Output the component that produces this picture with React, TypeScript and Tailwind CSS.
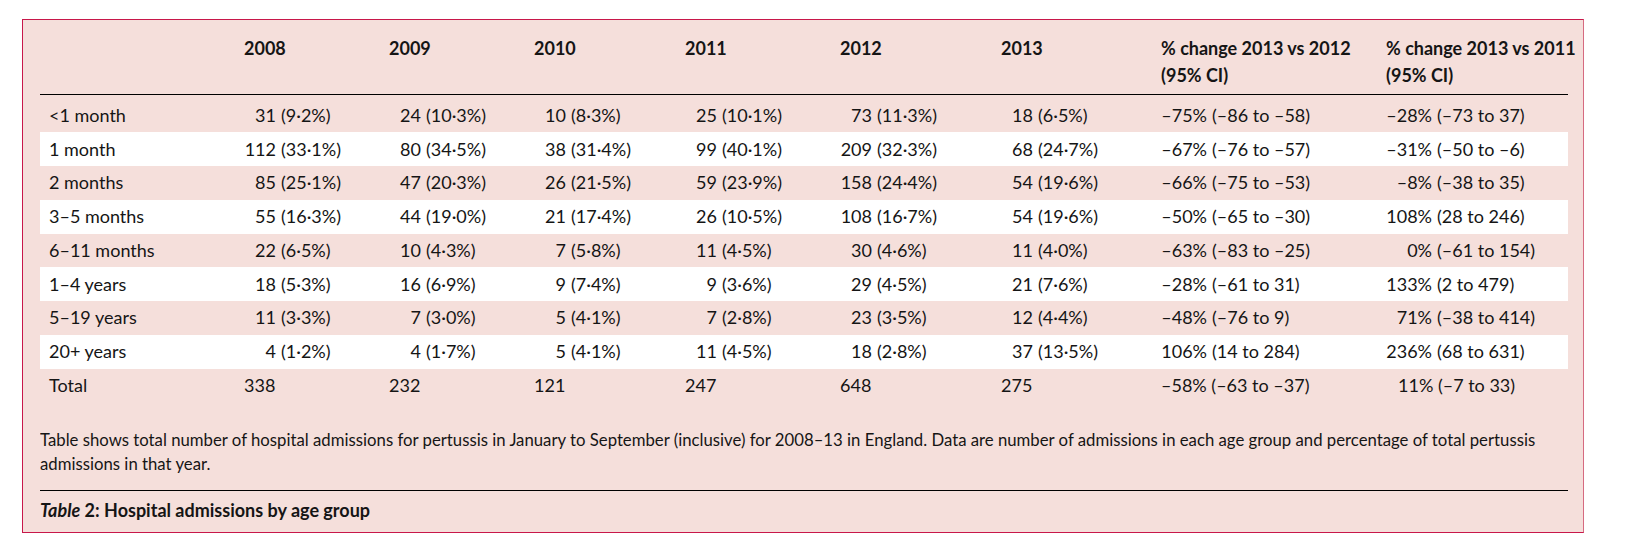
import React from "react";

type Cell = [string, string];
type Row = { label: string; cells: Cell[]; white: boolean };

const rows: Row[] = [
  { label: "<1 month", white: false, cells: [["31", "9·2%"], ["24", "10·3%"], ["10", "8·3%"], ["25", "10·1%"], ["73", "11·3%"], ["18", "6·5%"], ["–75%", "–86 to –58"], ["–28%", "–73 to 37"]] },
  { label: "1 month", white: true, cells: [["112", "33·1%"], ["80", "34·5%"], ["38", "31·4%"], ["99", "40·1%"], ["209", "32·3%"], ["68", "24·7%"], ["–67%", "–76 to –57"], ["–31%", "–50 to –6"]] },
  { label: "2 months", white: false, cells: [["85", "25·1%"], ["47", "20·3%"], ["26", "21·5%"], ["59", "23·9%"], ["158", "24·4%"], ["54", "19·6%"], ["–66%", "–75 to –53"], ["–8%", "–38 to 35"]] },
  { label: "3–5 months", white: true, cells: [["55", "16·3%"], ["44", "19·0%"], ["21", "17·4%"], ["26", "10·5%"], ["108", "16·7%"], ["54", "19·6%"], ["–50%", "–65 to –30"], ["108%", "28 to 246"]] },
  { label: "6–11 months", white: false, cells: [["22", "6·5%"], ["10", "4·3%"], ["7", "5·8%"], ["11", "4·5%"], ["30", "4·6%"], ["11", "4·0%"], ["–63%", "–83 to –25"], ["0%", "–61 to 154"]] },
  { label: "1–4 years", white: true, cells: [["18", "5·3%"], ["16", "6·9%"], ["9", "7·4%"], ["9", "3·6%"], ["29", "4·5%"], ["21", "7·6%"], ["–28%", "–61 to 31"], ["133%", "2 to 479"]] },
  { label: "5–19 years", white: false, cells: [["11", "3·3%"], ["7", "3·0%"], ["5", "4·1%"], ["7", "2·8%"], ["23", "3·5%"], ["12", "4·4%"], ["–48%", "–76 to 9"], ["71%", "–38 to 414"]] },
  { label: "20+ years", white: true, cells: [["4", "1·2%"], ["4", "1·7%"], ["5", "4·1%"], ["11", "4·5%"], ["18", "2·8%"], ["37", "13·5%"], ["106%", "14 to 284"], ["236%", "68 to 631"]] },
];

const grid = "grid grid-cols-[204px_145px_145px_151px_155px_161px_160px_225px_181px]";

export default function App() {
  return (
    <div className="min-h-screen bg-white pt-[19px] pl-[22px]">
      <div className="w-[1562px] h-[514px] bg-[#f5dfdb] border border-[#c8174a] border-r-[#d66a80] pl-[17px] pr-[15px] pt-[15px] font-['Lato',sans-serif] text-[18px] text-[#151515]">
        {/* header */}
        <div className={`${grid} leading-[27px] font-bold pb-[5px] border-b border-black whitespace-nowrap`}>
          <div />
          <div>2008</div>
          <div>2009</div>
          <div>2010</div>
          <div>2011</div>
          <div>2012</div>
          <div>2013</div>
          <div>
            % change 2013 vs 2012
            <br />
            (95% CI)
          </div>
          <div>
            % change 2013 vs 2011
            <br />
            (95% CI)
          </div>
        </div>
        {/* body */}
        <div className="pt-[3.5px]">
          {rows.map((r) => (
            <div key={r.label} className={`${grid} h-[33.75px] items-center ${r.white ? "bg-white" : ""}`}>
              <div className="pl-[9px]">{r.label}</div>
              {r.cells.map((c, i) => (
                <div key={i} className="flex whitespace-nowrap">
                  <span className={`${i >= 6 ? "w-[46px]" : "w-[32px]"} text-right`}>{c[0]}</span>
                  <span className="ml-[5px]">({c[1]})</span>
                </div>
              ))}
            </div>
          ))}
          <div className={`${grid} h-[33.75px] items-center`}>
            <div className="pl-[9px]">Total</div>
            <div>338</div>
            <div>232</div>
            <div>121</div>
            <div>247</div>
            <div>648</div>
            <div>275</div>
            <div className="whitespace-nowrap">–58% (–63 to –37)</div>
            <div className="whitespace-nowrap pl-[12px]">11% (–7 to 33)</div>
          </div>
        </div>
        {/* caption */}
        <div className="mt-[25px] overflow-hidden">
          <div className="leading-[24px] whitespace-nowrap origin-left scale-x-[0.93] w-max">
            Table shows total number of hospital admissions for pertussis in January to September (inclusive) for 2008–13 in England. Data are number of admissions in each age group and percentage of total pertussis
            <br />
            admissions in that year.
          </div>
        </div>
        <div className="mt-[14.5px] border-t border-black pt-[7px] leading-[25px] font-bold">
          <span className="italic">Table</span> 2: Hospital admissions by age group
        </div>
      </div>
    </div>
  );
}
